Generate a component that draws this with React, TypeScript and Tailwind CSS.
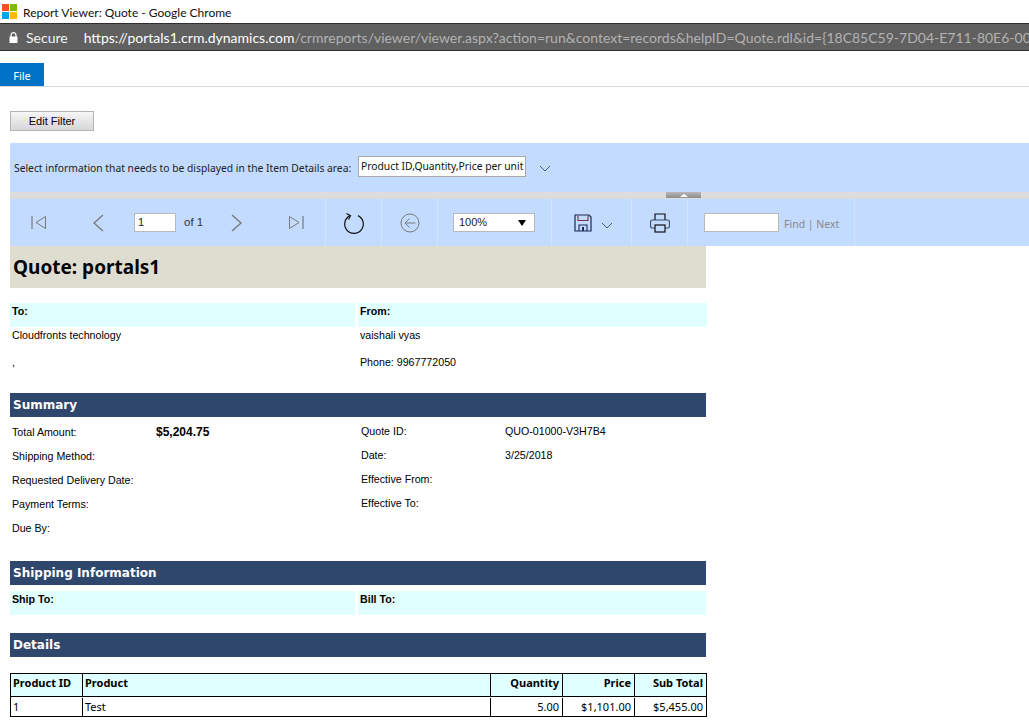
import React from 'react';

const arial = "font-['Liberation_Sans',Arial,sans-serif]";
const segoe = "font-['Lato',sans-serif]";
const verdana = "font-['DejaVu_Sans',sans-serif]";
const tahoma = "font-['Noto_Sans',sans-serif]";

const Icon = ({ w, h, children }: { w: number; h: number; children: React.ReactNode }) => (
  <svg width={w} height={h} viewBox={`0 0 ${w} ${h}`} fill="none" className="block shrink-0">
    {children}
  </svg>
);

const Chevron = () => (
  <Icon w={12} h={7}>
    <path d="M1 1l5 5 5-5" stroke="#4a5a70" strokeWidth="1" />
  </Icon>
);

const SectionBar = ({ title, className }: { title: string; className: string }) => (
  <div className={`h-6 w-[696px] bg-[#2f466d] pl-[3px] text-[12px] leading-[24px] font-bold text-white ${verdana} ${className}`}>
    {title}
  </div>
);

const summaryRows = [
  ['Total Amount:', '$5,204.75', 'Quote ID:', 'QUO-01000-V3H7B4'],
  ['Shipping Method:', '', 'Date:', '3/25/2018'],
  ['Requested Delivery Date:', '', 'Effective From:', ''],
  ['Payment Terms:', '', 'Effective To:', ''],
  ['Due By:', '', '', ''],
];

const ToolCell = ({ width, className = '', children }: { width: number; className?: string; children: React.ReactNode }) => (
  <div
    style={{ width }}
    className={`flex h-full shrink-0 items-center border-r border-[#d4e3f8] ${className}`}
  >
    {children}
  </div>
);

const TableCell = ({ width, right, bold, children }: { width: string; right?: boolean; bold?: boolean; children: React.ReactNode }) => (
  <div className={`${width} shrink-0 border-r border-black pl-[2px] pr-[3px] leading-[18px] last:border-r-0 ${right ? 'text-right' : ''} ${bold ? 'font-bold' : ''}`}>
    {children}
  </div>
);

const App = () => {
  return (
    <div className={`h-[720px] w-[1029px] overflow-hidden bg-white text-black ${arial}`}>
      {/* chrome window title */}
      <div className="flex h-[23px] items-center pl-[2px]">
        <div className="grid h-[15px] w-[15px] grid-cols-2 gap-px">
          <div className="bg-[#f25022]" />
          <div className="bg-[#7fba00]" />
          <div className="bg-[#00a4ef]" />
          <div className="bg-[#ffb900]" />
        </div>
        <span className={`ml-[6px] mt-[2px] text-[12px] text-[#111] ${segoe}`}>Report Viewer: Quote - Google Chrome</span>
      </div>

      {/* address bar */}
      <div className={`flex h-[28px] items-center overflow-hidden whitespace-nowrap border-y border-[#2e2e2e] bg-[#606060] text-[14px] ${segoe}`}>
        <div className="ml-[9px]">
          <Icon w={9} h={11}>
            <path d="M2 5V3.2a2.5 2.5 0 015 0V5" stroke="#fff" strokeWidth="1.2" />
            <rect x="0.5" y="4.5" width="8" height="6.5" rx="0.5" fill="#fff" />
          </Icon>
        </div>
        <span className="ml-[8px] text-[#f4f4f4]">Secure</span>
        <div className="mx-[8px] h-[16px] w-px bg-[#c8c8c8]" />
        <span className="text-white">https://portals1.crm.dynamics.com</span>
        <span className="text-[#b2b2b2]">/crmreports/viewer/viewer.aspx?action=run&amp;context=records&amp;helpID=Quote.rdl&amp;id={'{'}18C85C59-7D04-E711-80E6-00</span>
      </div>

      {/* ribbon */}
      <div className="mt-3 h-6 border-b border-[#d8d8d8]">
        <div className={`flex h-[23px] w-[44px] items-center justify-center bg-[#0072c6] pt-[3px] text-[11px] text-white ${tahoma}`}>File</div>
      </div>

      <div className="pl-[10px]">
        <button className="mt-6 block h-5 w-[84px] border border-[#b4b4b4] bg-gradient-to-b from-[#f6f6f6] to-[#d6d6d6] text-[11px] text-black">
          Edit Filter
        </button>

        {/* item details picker */}
        <div className={`mt-3 flex h-[49px] items-center whitespace-nowrap bg-[#c2dbff] pl-1 ${tahoma}`}>
          <span className="mt-[2px] w-[344px] shrink-0 text-[10.3px] text-[#222]">Select information that needs to be displayed in the Item Details area:</span>
          <div className="mb-[2px] flex h-[21px] w-[168px] shrink-0 items-center border border-[#a9a9a9] bg-white px-[2px] text-[10.3px] text-[#111]">
            Product ID,Quantity,Price per unit
          </div>
          <div className="ml-[13px] mt-[2px]"><Chevron /></div>
        </div>

        {/* splitter */}
        <div className="flex h-[7px] bg-[#dcdcdc] pl-[656px]">
          <div className="flex h-[6px] w-[35px] items-center justify-center bg-gradient-to-b from-[#b8b8b8] to-[#8e8e8e]">
            <div className="h-0 w-0 border-x-[4px] border-b-[3px] border-x-transparent border-b-white" />
          </div>
        </div>

        {/* report toolbar */}
        <div className={`flex h-[47px] bg-[#c2dbff] text-[11px] ${arial}`}>
          <ToolCell width={316}>
            <div className="ml-[21px]">
              <Icon w={15} h={15}>
                <path d="M1 1v13" stroke="#7a7a7a" strokeWidth="1.2" />
                <path d="M14.5 1.5v12L5 7.5z" stroke="#7a7a7a" strokeWidth="1" />
              </Icon>
            </div>
            <div className="ml-[46px]">
              <Icon w={12} h={18}>
                <path d="M11 1L2 9l9 8" stroke="#7a7a7a" strokeWidth="1.4" />
              </Icon>
            </div>
            <div className="ml-[30px] flex h-[19px] w-[42px] items-center border border-[#b8b8b8] bg-white pl-[3px] text-[#222]">1</div>
            <span className="ml-2 text-[11.5px] text-[#333]">of 1</span>
            <div className="ml-[28px]">
              <Icon w={12} h={18}>
                <path d="M1 1l9 8-9 8" stroke="#7a7a7a" strokeWidth="1.4" />
              </Icon>
            </div>
            <div className="ml-[46px]">
              <Icon w={15} h={15}>
                <path d="M0.5 1.5v12L10 7.5z" stroke="#7a7a7a" strokeWidth="1" />
                <path d="M14 1v13" stroke="#7a7a7a" strokeWidth="1.2" />
              </Icon>
            </div>
          </ToolCell>
          <ToolCell width={56} className="justify-center">
            <Icon w={22} h={24}>
              <path d="M7 4.6a9.3 9.3 0 108 0" stroke="#111" strokeWidth="1.2" />
              <path d="M3.5 2.5L7.5 4.8 5.5 8.5" stroke="#111" strokeWidth="1.2" />
            </Icon>
          </ToolCell>
          <ToolCell width={56} className="justify-center">
            <Icon w={20} h={20}>
              <circle cx="10" cy="10" r="9" stroke="#7a7a7a" strokeWidth="1" />
              <path d="M15.5 10H5M9.5 5.5L5 10l4.5 4.5" stroke="#7a7a7a" strokeWidth="1" />
            </Icon>
          </ToolCell>
          <ToolCell width={114} className="pl-[15px]">
            <div className="flex h-[19px] w-[82px] items-center justify-between border border-[#b8b8b8] bg-white pl-[5px] pr-[8px] text-[#222]">
              <span>100%</span>
              <div className="h-0 w-0 border-x-[4px] border-t-[6px] border-x-transparent border-t-black" />
            </div>
          </ToolCell>
          <ToolCell width={80} className="pl-[22px]">
            <Icon w={18} h={18}>
              <path d="M1 1h14l2 2v14H1z" stroke="#1a2a50" strokeWidth="1.2" />
              <path d="M4 1.5v5h10v-5" stroke="#7a3040" strokeWidth="1.1" />
              <path d="M5 17v-6h8v6" stroke="#1a2a50" strokeWidth="1.1" />
              <path d="M8 13h2v4H8z" fill="#1a2a50" />
            </Icon>
            <div className="ml-[9px] mt-[5px]"><Chevron /></div>
          </ToolCell>
          <ToolCell width={56} className="justify-center">
            <Icon w={20} h={20}>
              <path d="M5 7V1h10v6" stroke="#111" strokeWidth="1.2" />
              <rect x="0.6" y="7" width="18.8" height="8" rx="1.5" stroke="#3a4a68" strokeWidth="1.1" />
              <rect x="5" y="12" width="10" height="7" fill="#c2dbff" stroke="#111" strokeWidth="1.2" />
            </Icon>
          </ToolCell>
          <ToolCell width={167} className="pl-4">
            <div className="h-[19px] w-[75px] border border-[#b8b8b8] bg-white" />
            <span className={`ml-[5px] mt-[4px] whitespace-nowrap text-[10.5px] text-[#8a8a8a] ${tahoma}`}>Find | Next</span>
          </ToolCell>
        </div>

        {/* report body */}
        <div className={`flex h-[42px] w-[696px] items-center bg-[#dfddd0] pl-[3px] text-[19px] font-bold text-[#050505] ${tahoma}`}>
          Quote: portals1
        </div>

        <div className="mt-[15px] flex h-6 w-[697px] justify-between text-[10.67px] font-bold leading-[17px]">
          <div className="w-[345px] bg-[#e0ffff] pl-[2px]">To:</div>
          <div className="w-[349px] bg-[#e0ffff] pl-[2px]">From:</div>
        </div>
        <div className="flex h-[66px] w-[697px] justify-between text-[10.67px]">
          <div className="w-[345px] pl-[2px]">
            <div className="mt-[2px] leading-[12px]">Cloudfronts technology</div>
            <div className="mt-[15px] leading-[12px]">,</div>
          </div>
          <div className="w-[349px] pl-[2px]">
            <div className="mt-[2px] leading-[12px]">vaishali vyas</div>
            <div className="mt-[15px] leading-[12px]">Phone: 9967772050</div>
          </div>
        </div>

        <SectionBar title="Summary" className="" />
        <div className="mt-[3px] w-[696px] text-[10.67px]">
          {summaryRows.map((row) => (
            <div key={row[0]} className="grid h-6 grid-cols-[144px_205px_144px_1fr] items-center pl-[2px]">
              <span>{row[0]}</span>
              <span className="text-[12px] font-bold">{row[1]}</span>
              <span className="-mt-[2px]">{row[2]}</span>
              <span className="-mt-[2px]">{row[3]}</span>
            </div>
          ))}
        </div>

        <SectionBar title="Shipping Information" className="mt-[21px]" />
        <div className="mt-[6px] flex h-6 w-[696px] justify-between text-[10.67px] font-bold leading-[17px]">
          <div className="w-[345px] bg-[#e0ffff] pl-[2px]">Ship To:</div>
          <div className="w-[348px] bg-[#e0ffff] pl-[2px]">Bill To:</div>
        </div>

        <SectionBar title="Details" className="mt-[18px]" />

        <div className={`mt-4 w-[697px] border border-black text-[11px] ${tahoma}`}>
          <div className="flex h-[23px] border-b border-black bg-[#e0ffff]">
            <TableCell width="w-[72px]" bold>Product ID</TableCell>
            <TableCell width="w-[408px]" bold>Product</TableCell>
            <TableCell width="w-[72px]" right bold>Quantity</TableCell>
            <TableCell width="w-[72px]" right bold>Price</TableCell>
            <TableCell width="w-[71px]" right bold>Sub Total</TableCell>
          </div>
          <div className="flex h-[19px] pt-px">
            <TableCell width="w-[72px]">1</TableCell>
            <TableCell width="w-[408px]">Test</TableCell>
            <TableCell width="w-[72px]" right>5.00</TableCell>
            <TableCell width="w-[72px]" right>$1,101.00</TableCell>
            <TableCell width="w-[71px]" right>$5,455.00</TableCell>
          </div>
        </div>
      </div>
    </div>
  );
};

export default App;
